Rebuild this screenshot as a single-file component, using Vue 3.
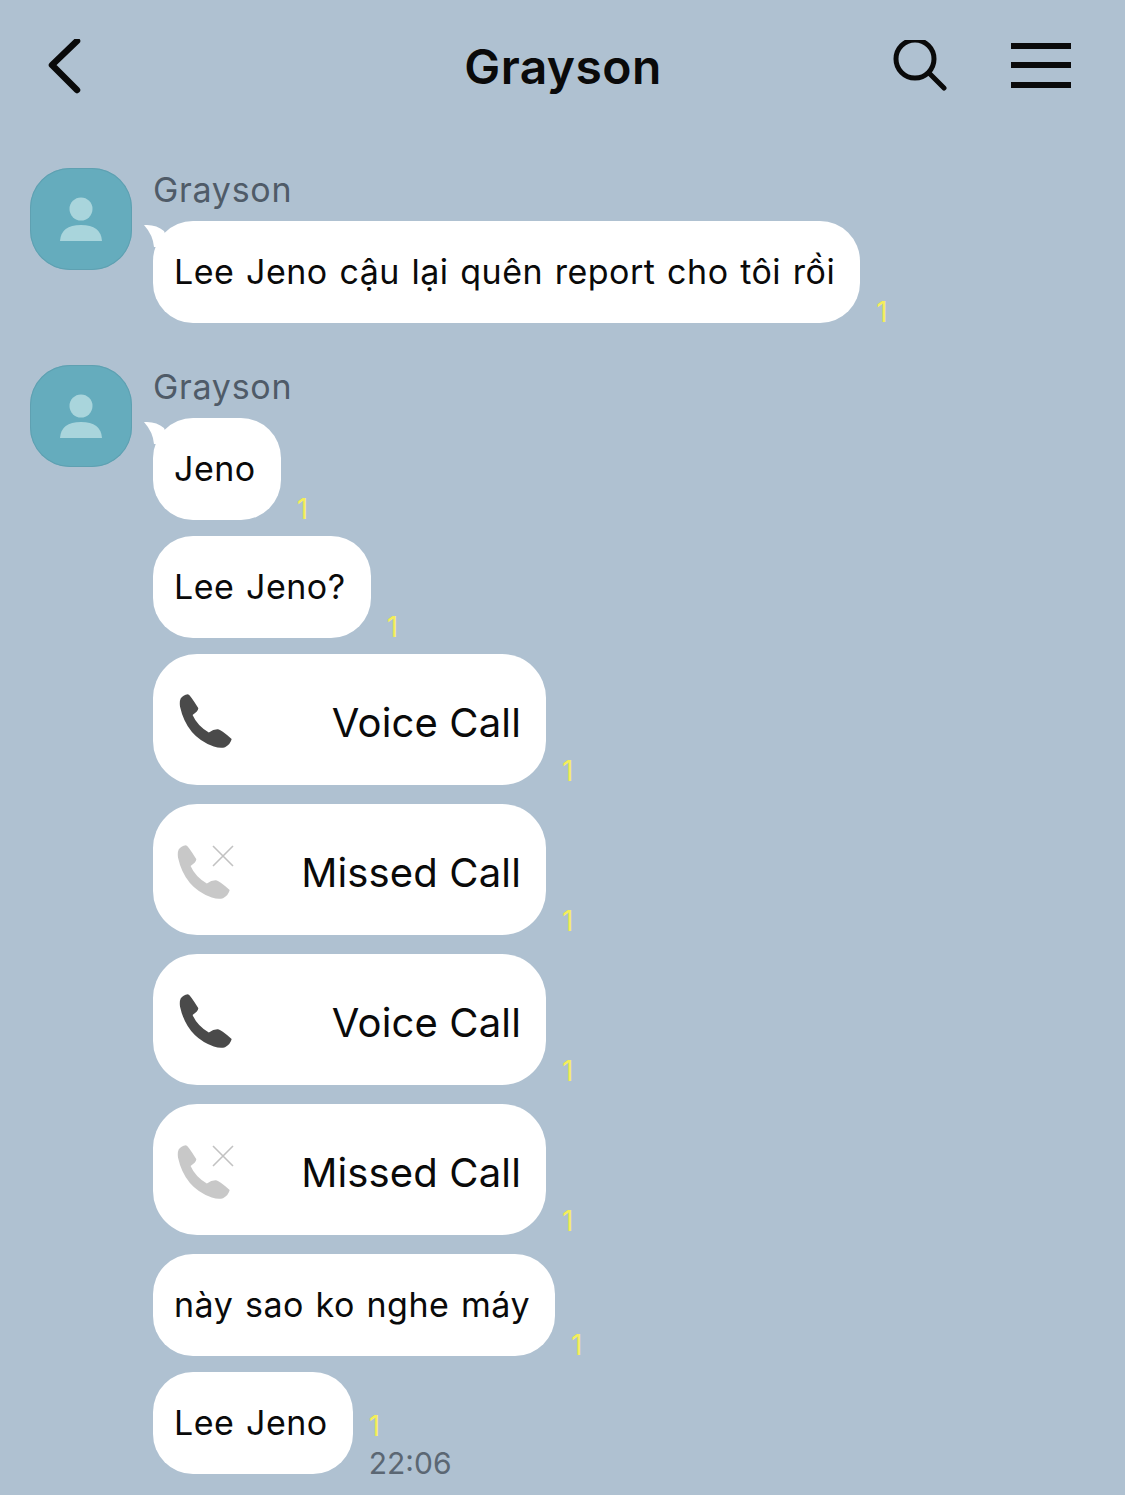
<script setup>
const groups = [
  {
    id: 1,
    messages: [{ id: 1, text: "Lee Jeno cậu lại quên report cho tôi rồi" }],
  },
  {
    id: 2,
    messages: [
      { id: 2, text: "Jeno" },
      { id: 3, text: "Lee Jeno?" },
      { id: 4, call: "Voice Call" },
      { id: 5, call: "Missed Call", missed: true },
      { id: 6, call: "Voice Call" },
      { id: 7, call: "Missed Call", missed: true },
      { id: 8, text: "này sao ko nghe máy" },
      { id: 9, text: "Lee Jeno", time: "22:06" },
    ],
  },
];

const phonePath =
  "M90 146Q97 135 112 133Q119 135 143 175Q145 183 126 196Q140 228 175 249Q190 238 203 239Q211 240 244 268Q241 283 224 293Q210 297 190 291Q108 262 88 170Q86 155 90 146Z";
</script>

<template>
  <div class="screen">
    <header class="topbar">
      <svg class="back" viewBox="0 0 36 56" width="36" height="56">
        <path d="M30 2L5 26L30 51" fill="none" stroke="#0a0a0a" stroke-width="6.5" stroke-linecap="round" stroke-linejoin="round" />
      </svg>
      <h1 class="title">Grayson</h1>
      <div class="actions">
        <svg viewBox="0 0 54 54" width="54" height="54">
          <circle cx="22" cy="19" r="19" fill="none" stroke="#0a0a0a" stroke-width="5" />
          <path d="M36 33L51 48" fill="none" stroke="#0a0a0a" stroke-width="5" stroke-linecap="round" />
        </svg>
        <div class="menu"><span></span><span></span><span></span></div>
      </div>
    </header>

    <section v-for="group in groups" :key="group.id" class="group">
      <div class="avatar">
        <svg viewBox="0 0 102 102" width="102" height="102">
          <circle cx="51" cy="41" r="11.5" fill="#a9d5dc" />
          <path d="M30 73Q31 57 51 57Q71 57 72 73Z" fill="#a9d5dc" />
        </svg>
      </div>
      <div class="column">
        <div class="name">Grayson</div>
        <div class="messages">
          <div v-for="(msg, i) in group.messages" :key="msg.id" class="row" :class="{ 'row-call': msg.call }">
            <div v-if="msg.call" class="bubble call">
              <svg class="call-icon" :class="{ missed: msg.missed }" viewBox="85 130 160 165" width="53" height="55">
                <path :d="phonePath" :fill="msg.missed ? '#c8c8c8' : '#4a4a4a'" />
              </svg>
              <svg v-if="msg.missed" class="cross" viewBox="0 0 22 22" width="22" height="22">
                <path d="M1 1L21 21M21 1L1 21" fill="none" stroke="#c2c2c2" stroke-width="1.6" />
              </svg>
              <span class="call-label">{{ msg.call }}</span>
            </div>
            <div v-else class="bubble">
              <svg v-if="i === 0" class="tail" viewBox="0 0 26 26" width="26" height="26">
                <path d="M0 4Q12 3 20 10L26 26H10Q9 14 0 4Z" fill="#fff" />
              </svg>
              {{ msg.text }}
            </div>
            <div class="meta">
              <span class="unread">1</span>
              <span v-if="msg.time" class="time">{{ msg.time }}</span>
            </div>
          </div>
        </div>
      </div>
    </section>
  </div>
</template>

<style scoped>
.screen {
  width: 1125px;
  height: 1495px;
  overflow: hidden;
  background: #afc1d1;
  font-family: Inter, "Liberation Sans", sans-serif;
  color: #0a0a0a;
}

.topbar {
  display: grid;
  grid-template-columns: 1fr auto 1fr;
  align-items: center;
  height: 134px;
  padding: 0 54px 0 47px;
}

.back {
  display: block;
}

.title {
  margin: 0 0 1px 8px;
  font-size: 48px;
  font-weight: 600;
  letter-spacing: 0.4px;
}

.actions {
  display: flex;
  justify-content: flex-end;
  align-items: center;
  gap: 64px;
}

.menu {
  display: flex;
  flex-direction: column;
  gap: 13.5px;
  width: 60px;
  margin-bottom: 4px;
}

.menu span {
  height: 6px;
  background: #0a0a0a;
}

.group {
  display: flex;
  gap: 21px;
  padding: 34px 0 8px 30px;
}

.avatar {
  flex: none;
  width: 102px;
  height: 102px;
  box-sizing: border-box;
  border-radius: 40px;
  background: #65acbd;
  box-shadow: inset 0 0 0 1px #5fa0b1;
}

.avatar svg {
  display: block;
}

.name {
  height: 53px;
  font-size: 34px;
  line-height: 44px;
  letter-spacing: 0.7px;
  color: #4f5b68;
}

.messages {
  display: flex;
  flex-direction: column;
  gap: 16px;
}

.row {
  display: flex;
  align-items: flex-end;
  gap: 16px;
}

.row-call + .row-call,
.row-call + .row {
  margin-top: 3px;
}

.bubble {
  position: relative;
  height: 102px;
  box-sizing: border-box;
  padding: 0 25px 2px 21px;
  display: flex;
  align-items: center;
  background: #fff;
  border-radius: 40px;
  font-size: 34px;
  letter-spacing: 0.5px;
  word-spacing: 1.6px;
  white-space: nowrap;
}

.tail {
  position: absolute;
  left: -9px;
  top: 0;
}

.call {
  position: relative;
  width: 393px;
  height: 131px;
  padding: 6px 25px 0 26px;
  justify-content: space-between;
  border-radius: 44px;
}

.call-icon {
  flex: none;
  margin-top: -5px;
}

.call-icon.missed {
  margin-top: -3px;
  margin-left: -2px;
}

.cross {
  position: absolute;
  left: 59px;
  top: 41px;
}

.call-label {
  font-size: 40px;
  letter-spacing: 0.15px;
  word-spacing: 0;
}

.meta {
  display: flex;
  flex-direction: column;
  margin-bottom: -2px;
  font-size: 28px;
  line-height: 26px;
}

.row-call .meta {
  margin-bottom: 1px;
}

.unread {
  color: #f4ee5a;
}

.time {
  margin-top: 11px;
  font-size: 30px;
  line-height: 26px;
  color: #5b6773;
}
</style>
